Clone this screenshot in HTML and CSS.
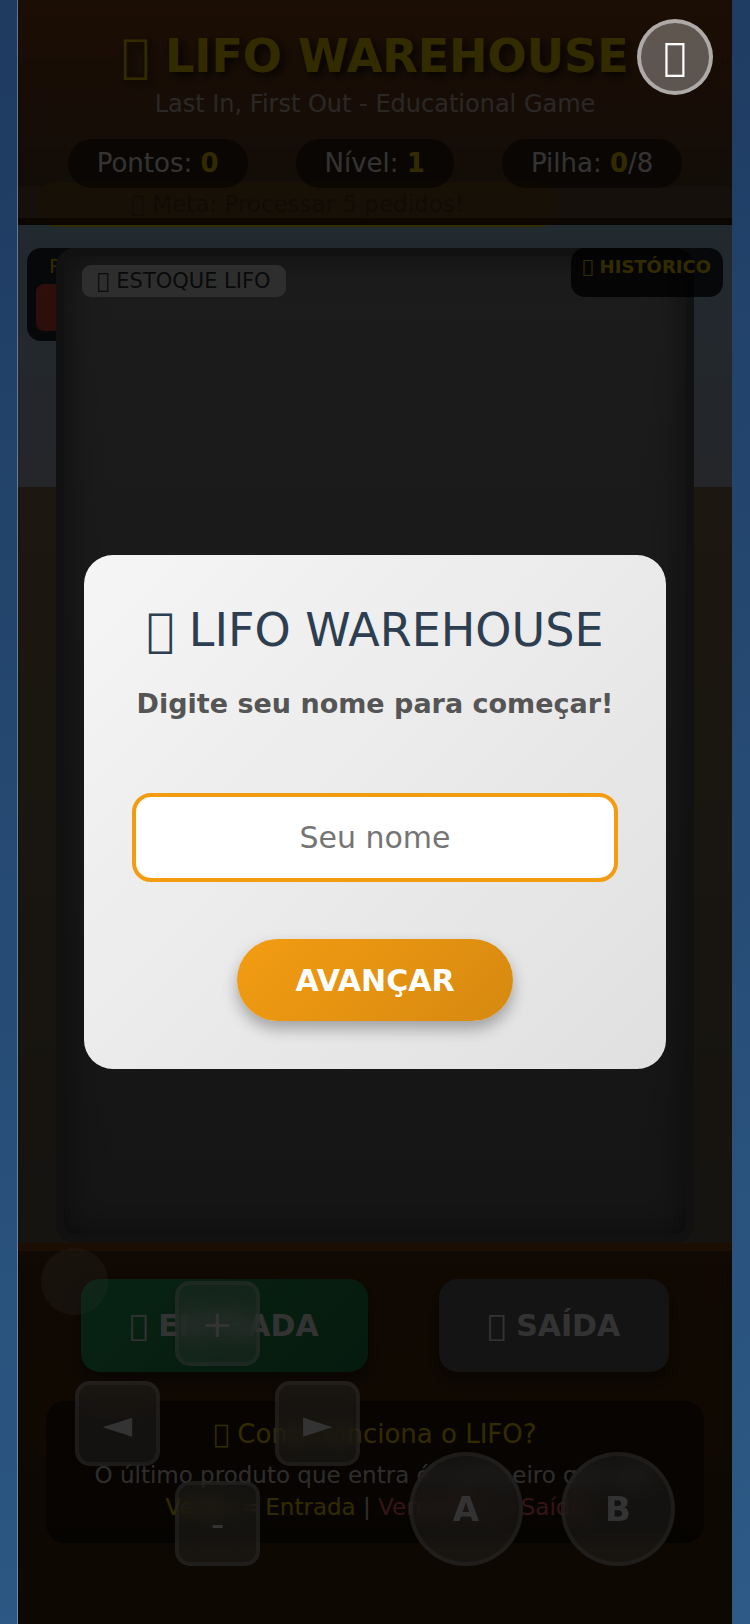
FILE: index.html
```html
<!DOCTYPE html>
<html lang="pt-BR">
<head>
    <meta charset="UTF-8">
    <meta name="viewport" content="width=device-width, initial-scale=1.0">
    <title>LIFO Warehouse</title>
    <link rel="stylesheet" href="styles.css">
</head>
<body>
    <div class="game-container">
        <header class="header">
            <h1>&#x10FFFD; LIFO WAREHOUSE</h1>
            <p class="subtitle">Last In, First Out - Educational Game</p>
            <div class="stats">
                <div class="stat">Pontos: <strong id="score">0</strong></div>
                <div class="stat">Nível: <strong id="level">1</strong></div>
                <div class="stat">Pilha: <strong id="stackSize">0</strong>/8</div>
            </div>
        </header>

        <main class="warehouse">
            <div class="goal">&#x10FFFD; Meta: Processar 5 pedidos!</div>
            <div class="orders">
                <div class="orders-title">PEDIDOS</div>
                <div class="order-card"></div>
            </div>
            <div class="stack-area">
                <div class="stack-label">&#x10FFFD; ESTOQUE LIFO</div>
            </div>
            <div class="history">&#x10FFFD; HISTÓRICO</div>
        </main>

        <section class="controls">
            <div class="actions">
                <button type="button" class="action-btn push-btn">&#x10FFFD; ENTRADA</button>
                <button type="button" class="action-btn pop-btn">&#x10FFFD; SAÍDA</button>
            </div>
            <div class="info">
                <h2>&#x10FFFD; Como funciona o LIFO?</h2>
                <p>O último produto que entra é o primeiro que sai!</p>
                <p><span class="gold">Verde = Entrada</span> | <span class="red">Vermelho = Saída</span></p>
            </div>
        </section>

        <!-- mobile gamepad -->
        <div class="joystick"></div>
        <div class="dpad">
            <button type="button" class="pad-btn up">+</button>
            <button type="button" class="pad-btn left">◄</button>
            <button type="button" class="pad-btn right">►</button>
            <button type="button" class="pad-btn down">-</button>
        </div>
        <div class="ab-buttons">
            <button type="button" class="round-btn">A</button>
            <button type="button" class="round-btn">B</button>
        </div>

        <div class="overlay">
            <form class="modal" onsubmit="return false;">
                <h2>&#x10FFFD; LIFO WAREHOUSE</h2>
                <label for="playerName">Digite seu nome para começar!</label>
                <input type="text" id="playerName" placeholder="Seu nome" maxlength="20">
                <button type="submit" class="next-btn">AVANÇAR</button>
            </form>
        </div>

        <button type="button" class="fullscreen-btn" aria-label="Tela cheia">&#x10FFFD;</button>
    </div>
</body>
</html>
```

FILE: styles.css
```css
* {
    box-sizing: border-box;
    margin: 0;
    padding: 0;
}
body {
    background: linear-gradient(170deg, #1e3a5f, #2d5a87);
    font-family: "DejaVu Sans", sans-serif;
    color: white;
    min-height: 100vh;
}
button, input {
    font-family: inherit;
}
.game-container {
    position: relative;
    display: flex;
    flex-direction: column;
    min-height: 100vh;
    margin: 0 18px;
    overflow: hidden;
    box-shadow: -1px 0 0 rgba(255, 255, 255, 0.3);
}

/* Header */
.header {
    position: relative;
    z-index: 2;
    height: 225px;
    padding-top: 29px;
    background: linear-gradient(rgba(139, 69, 19, 0.98), rgba(95, 65, 35, 0.88));
    border-bottom: 7px solid #3d2008;
    text-align: center;
}
.header h1 {
    color: #FFD700;
    font-size: 46px;
    line-height: 54px;
    text-shadow: 4px 4px 8px rgba(0, 0, 0, 0.8);
}
.subtitle {
    color: rgba(255, 255, 255, 0.7);
    font-size: 24px;
    line-height: 28px;
    margin-top: 7px;
}
.stats {
    display: flex;
    justify-content: center;
    gap: 48px;
    margin-top: 21px;
}
.stat {
    background: rgba(0, 0, 0, 0.5);
    border-radius: 24px;
    padding: 0 29px;
    font-size: 26px;
    line-height: 49px;
}
.stat strong {
    color: #FFD700;
}

/* Warehouse */
.warehouse {
    position: relative;
    flex: 1;
    display: flex;
    margin-top: -38px;
    padding: 61px 38px 0;
    background: linear-gradient(#a0d2eb, #b4bcd0 300px, #8c7350 300px, #6e6450);
}
.goal {
    position: absolute;
    top: -5px;
    left: 19px;
    width: 521px;
    height: 45px;
    background: #FFD700;
    color: black;
    border-radius: 19px;
    font-size: 23px;
    line-height: 45px;
    text-align: center;
}
.orders {
    position: absolute;
    top: 61px;
    left: 9px;
    width: 134px;
    height: 93px;
    padding: 9px;
    background: rgba(0, 0, 0, 0.8);
    border-radius: 14px;
    text-align: center;
}
.orders-title {
    color: #FFD700;
    font-size: 20px;
    line-height: 18px;
}
.order-card {
    height: 47px;
    margin-top: 9px;
    background: linear-gradient(135deg, #e74c3c, #c0392b);
    border-radius: 8px;
}
.stack-area {
    position: relative;
    flex: 1;
    padding: 9px 18px;
    background: linear-gradient(#8c8c8c, #6a6a6a);
    border: 8px solid #555;
    border-radius: 19px;
    box-shadow: inset 0 0 38px rgba(0, 0, 0, 0.5);
}
.stack-label {
    display: inline-block;
    padding: 0 15px;
    background: rgba(255, 255, 255, 0.8);
    color: #333;
    border-radius: 9px;
    font-size: 21px;
    line-height: 32px;
}
.history {
    position: absolute;
    top: 61px;
    right: 9px;
    height: 49px;
    padding: 9px 12px;
    background: rgba(0, 0, 0, 0.8);
    color: #FFD700;
    border-radius: 14px;
    font-size: 18px;
    font-weight: bold;
    line-height: 20px;
}

/* Controls */
.controls {
    height: 381px;
    padding: 28px;
    background: linear-gradient(#54300f, #402a0c);
    border-top: 8px solid #8B4513;
}
.actions {
    display: flex;
    justify-content: center;
    gap: 71px;
}
.action-btn {
    height: 93px;
    padding: 0 49px;
    border: none;
    border-radius: 19px;
    color: white;
    font-size: 30px;
    font-weight: bold;
    box-shadow: 0 8px 15px rgba(0, 0, 0, 0.4);
    cursor: pointer;
}
.push-btn {
    background: linear-gradient(135deg, #27ae60, #1e8449);
}
.pop-btn {
    background: #666;
}
.info {
    height: 142px;
    margin-top: 29px;
    padding-top: 18px;
    background: rgba(0, 0, 0, 0.5);
    border-radius: 19px;
    text-align: center;
}
.info h2 {
    color: #FFD700;
    font-size: 26px;
    font-weight: normal;
    line-height: 30px;
    margin-bottom: 10px;
}
.info p {
    color: rgba(255, 255, 255, 0.9);
    font-size: 23px;
    line-height: 32px;
    white-space: nowrap;
}
.info .gold {
    color: #FFD700;
}
.info .red {
    color: #ff6b6b;
}

/* Gamepad lies over the controls */
.joystick {
    position: absolute;
    left: 23px;
    bottom: 309px;
    width: 67px;
    height: 67px;
    background: rgba(255, 255, 255, 0.2);
    border-radius: 50%;
}
.dpad {
    position: absolute;
    left: 57px;
    bottom: 58px;
    display: grid;
    grid-template-columns: repeat(3, 85px);
    grid-template-rows: repeat(3, 85px);
    gap: 15px;
}
.pad-btn, .round-btn {
    background: rgba(255, 255, 255, 0.3);
    border: 4px solid rgba(255, 255, 255, 0.3);
    color: white;
    backdrop-filter: blur(10px);
}
.pad-btn {
    border-radius: 15px;
    font-size: 38px;
}
.up {
    grid-area: 1 / 2;
}
.left {
    grid-area: 2 / 1;
}
.right {
    grid-area: 2 / 3;
}
.down {
    grid-area: 3 / 2;
}
.ab-buttons {
    position: absolute;
    right: 57px;
    bottom: 58px;
    display: flex;
    gap: 38px;
}
.round-btn {
    width: 114px;
    height: 114px;
    border-radius: 50%;
    font-size: 34px;
    font-weight: bold;
}

/* Name modal */
.overlay {
    position: absolute;
    inset: 0;
    z-index: 10;
    display: flex;
    justify-content: center;
    align-items: center;
    padding: 0 66px;
    background: rgba(0, 0, 0, 0.8);
}
.modal {
    flex: 1;
    max-width: 600px;
    display: flex;
    flex-direction: column;
    align-items: center;
    padding: 48px;
    background: linear-gradient(135deg, #f5f5f5, #e0e0e0);
    border-radius: 29px;
    text-align: center;
}
.modal h2 {
    color: #2c3e50;
    font-size: 46px;
    font-weight: normal;
    line-height: 54px;
}
.modal label {
    color: #555;
    font-size: 27px;
    font-weight: bold;
    line-height: 32px;
    margin-top: 31px;
}
.modal input {
    width: 100%;
    height: 89px;
    margin-top: 73px;
    border: 4px solid #f39c12;
    border-radius: 19px;
    background: white;
    font-size: 30px;
    text-align: center;
}
.next-btn {
    height: 82px;
    margin-top: 57px;
    padding: 0 58px;
    background: linear-gradient(135deg, #f39c12, #d68910);
    border: none;
    border-radius: 41px;
    color: white;
    font-size: 30px;
    font-weight: bold;
    box-shadow: 0 8px 15px rgba(0, 0, 0, 0.3);
    cursor: pointer;
}
.fullscreen-btn {
    position: absolute;
    top: 19px;
    right: 19px;
    z-index: 11;
    width: 76px;
    height: 76px;
    background: rgba(255, 255, 255, 0.3);
    border: 4px solid rgba(255, 255, 255, 0.5);
    border-radius: 50%;
    color: white;
    font-size: 38px;
    cursor: pointer;
}
```
